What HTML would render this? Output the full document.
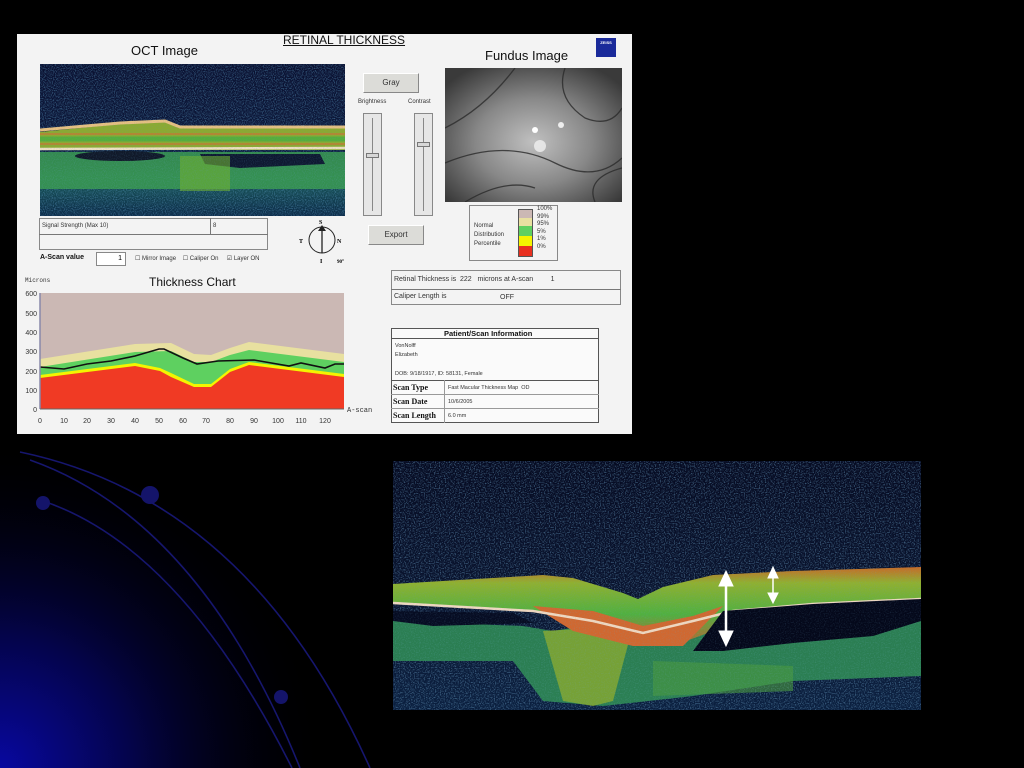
<!DOCTYPE html>
<html><head><meta charset="utf-8"><style>
*{margin:0;padding:0;box-sizing:border-box}
body{width:1024px;height:768px;background:#000;position:relative;overflow:hidden;font-family:"Liberation Sans",sans-serif}
.a{position:absolute}
.panel{left:17px;top:34px;width:615px;height:400px;background:#f3f3f3}
.t{position:absolute;white-space:nowrap;color:#111}
.btn{position:absolute;background:#dcdcd8;border:1px solid #fff;border-right-color:#888;border-bottom-color:#888;font-size:8px;text-align:center;color:#333}
.box{position:absolute;border:1px solid #888;background:#f8f8f8}
</style></head><body>
<svg class="a" style="left:0;top:0" width="1024" height="768">
<defs>
<radialGradient id="bg" cx="0" cy="768" r="330" gradientUnits="userSpaceOnUse">
<stop offset="0" stop-color="#0808a0"/><stop offset="0.4" stop-color="#04044a"/><stop offset="1" stop-color="#000" stop-opacity="0"/></radialGradient>
</defs>
<rect x="0" y="430" width="420" height="338" fill="url(#bg)"/>
<g fill="none" stroke="#16166e" stroke-width="1.6">
<path d="M20 452 Q250 500 370 768"/>
<path d="M30 460 Q200 520 300 768"/>
<path d="M40 500 Q180 545 292 768"/>
</g>
<g fill="#14146a"><circle cx="150" cy="495" r="9"/><circle cx="43" cy="503" r="7"/><circle cx="281" cy="697" r="7"/></g>
</svg>

<div class="a panel"></div>
<div class="t" style="left:131px;top:43px;font-size:13px">OCT Image</div>
<div class="t" style="left:283px;top:33px;font-size:12px;text-decoration:underline">RETINAL THICKNESS</div>
<div class="t" style="left:485px;top:48px;font-size:13px">Fundus Image</div>
<div class="a" style="left:596px;top:38px;width:20px;height:19px;background:#1a2a9a;color:#fff;font-size:4px;text-align:center;line-height:10px;font-weight:bold">ZEISS</div>

<!-- top OCT -->
<svg class="a" style="left:40px;top:64px" width="305" height="152">
<defs><filter id="n1"><feTurbulence type="fractalNoise" baseFrequency="0.9" numOctaves="1" seed="3"/><feColorMatrix values="0 0 0 0 0.1  0 0 0 0 0.3  0 0 0 0 0.5  0 0 0 1.6 -0.7"/></filter>
<linearGradient id="g1" x1="0" y1="0" x2="0" y2="1"><stop offset="0" stop-color="#0a1030"/><stop offset="0.55" stop-color="#0d1a3c"/><stop offset="0.75" stop-color="#1a5a5a"/><stop offset="1" stop-color="#0c2a48"/></linearGradient></defs>
<rect width="305" height="152" fill="url(#g1)"/>
<rect width="305" height="152" filter="url(#n1)" opacity="0.8"/>
<path d="M0 68 L80 60 L125 58 L140 64 L305 64 L305 86 L0 86Z" fill="#8caa30"/>
<path d="M0 66 L80 59 L125 57 L140 63 L305 63" stroke="#e8c080" stroke-width="3" fill="none"/>
<path d="M0 75 L305 75" stroke="#40b040" stroke-width="5" opacity="0.7"/>
<path d="M0 70 L305 70 M0 80 L305 80" stroke="#d07030" stroke-width="2" opacity="0.6"/>
<path d="M0 85 L305 84" stroke="#f0e0c0" stroke-width="2.5"/>
<path d="M0 88 L305 88 L305 125 L0 125Z" fill="#3a9a50" opacity="0.85"/>
<ellipse cx="80" cy="92" rx="45" ry="5" fill="#101828"/>
<path d="M160 90 L280 90 L285 100 L200 104 L165 100Z" fill="#0e1830"/>
<rect x="140" y="92" width="50" height="35" fill="#70b030" opacity="0.6"/>
<rect width="305" height="152" filter="url(#n1)" opacity="0.35"/>
</svg>

<!-- controls -->
<div class="btn" style="left:363px;top:73px;width:56px;height:20px;line-height:18px">Gray</div>
<div class="t" style="left:358px;top:99px;font-size:6px;color:#333">Brightness</div>
<div class="t" style="left:408px;top:99px;font-size:6px;color:#333">Contrast</div>
<div class="box" style="left:363px;top:113px;width:19px;height:103px;background:#e6e6e6"></div>
<div class="a" style="left:372px;top:118px;width:1px;height:93px;background:#888"></div>
<div class="a" style="left:366px;top:153px;width:13px;height:5px;background:#d8d8d8;border:1px solid #777"></div>
<div class="box" style="left:414px;top:113px;width:19px;height:103px;background:#e6e6e6"></div>
<div class="a" style="left:423px;top:118px;width:1px;height:93px;background:#888"></div>
<div class="a" style="left:417px;top:142px;width:13px;height:5px;background:#d8d8d8;border:1px solid #777"></div>
<div class="btn" style="left:368px;top:225px;width:56px;height:20px;line-height:18px">Export</div>

<!-- fundus -->
<svg class="a" style="left:445px;top:68px" width="177" height="134">
<defs><radialGradient id="fg" cx="0.5" cy="0.55" r="0.65"><stop offset="0" stop-color="#c0c0c0"/><stop offset="0.5" stop-color="#888"/><stop offset="1" stop-color="#3a3a3a"/></radialGradient></defs>
<rect width="177" height="134" fill="url(#fg)"/>
<g stroke="#2a2a2a" fill="none" stroke-width="1.3" opacity="0.8">
<path d="M0 60 Q40 40 70 0"/><path d="M0 95 Q60 70 110 95 Q150 115 177 90"/><path d="M120 0 Q110 30 140 50 Q165 60 177 40"/><path d="M20 134 Q60 110 90 120"/><path d="M150 134 Q140 110 177 100"/></g>
<circle cx="95" cy="78" r="6" fill="#f0f0f0" opacity="0.8"/><circle cx="90" cy="62" r="3" fill="#fff"/><circle cx="116" cy="57" r="3" fill="#eee"/>
</svg>

<!-- legend -->
<div class="box" style="left:469px;top:205px;width:89px;height:56px;background:#f3f3f3"></div>
<div class="t" style="left:474px;top:222px;font-size:6px;line-height:9px;color:#333">Normal<br>Distribution<br>Percentile</div>
<div class="a" style="left:518px;top:209px;width:15px;height:48px;border:1px solid #555">
<div style="height:8px;background:#cbb8b4"></div><div style="height:8px;background:#e8e0a0"></div><div style="height:10px;background:#5ed060"></div><div style="height:10px;background:#f4f400"></div><div style="height:10px;background:#e83020"></div></div>
<div class="t" style="left:537px;top:206px;font-size:6px;line-height:7.6px;color:#333">100%<br>99%<br>95%<br>5%<br>1%<br>0%</div>

<!-- signal -->
<div class="box" style="left:39px;top:218px;width:229px;height:32px;background:#f3f3f3"></div>
<div class="a" style="left:39px;top:234px;width:229px;height:1px;background:#777"></div>
<div class="a" style="left:210px;top:218px;width:1px;height:16px;background:#777"></div>
<div class="t" style="left:42px;top:223px;font-size:6px;color:#333">Signal Strength (Max 10)</div>
<div class="t" style="left:213px;top:223px;font-size:6px;color:#333">8</div>
<div class="t" style="left:40px;top:254px;font-size:7px;font-weight:bold">A-Scan value</div>
<div class="box" style="left:96px;top:252px;width:30px;height:14px;background:#fff;font-size:7px;text-align:right;padding-right:3px;line-height:12px">1</div>
<div class="t" style="left:135px;top:255px;font-size:6px;color:#333">☐ Mirror Image &nbsp;&nbsp; ☐ Caliper On &nbsp;&nbsp;&nbsp; ☑ Layer ON</div>
<!-- compass -->
<svg class="a" style="left:297px;top:217px" width="55" height="50">
<circle cx="25" cy="23" r="13" fill="none" stroke="#222" stroke-width="1"/>
<line x1="25" y1="36" x2="25" y2="11" stroke="#222" stroke-width="1.3"/><path d="M21 14 L25 8 L29 14Z" fill="#222"/>
<text x="22" y="7" font-size="6" font-weight="bold" font-family="Liberation Serif">S</text>
<text x="2" y="26" font-size="6" font-weight="bold" font-family="Liberation Serif">T</text>
<text x="40" y="26" font-size="6" font-weight="bold" font-family="Liberation Serif">N</text>
<text x="23" y="46" font-size="6" font-weight="bold" font-family="Liberation Serif">I</text>
<text x="40" y="46" font-size="5" font-weight="bold" font-family="Liberation Serif">90°</text>
</svg>

<!-- retinal thickness box -->
<div class="box" style="left:391px;top:270px;width:230px;height:35px;background:#f3f3f3"></div>
<div class="a" style="left:391px;top:289px;width:230px;height:1px;background:#777"></div>
<div class="t" style="left:394px;top:276px;font-size:7px;color:#333">Retinal Thickness is &nbsp;222 &nbsp;&nbsp;microns at A-scan &nbsp;&nbsp;&nbsp;&nbsp;&nbsp;&nbsp;&nbsp;&nbsp;1</div>
<div class="t" style="left:394px;top:293px;font-size:7px;color:#333">Caliper Length is</div>
<div class="t" style="left:500px;top:294px;font-size:7px;color:#333">OFF</div>

<!-- patient -->
<div class="box" style="left:391px;top:328px;width:208px;height:95px;border-color:#555;background:#fafafa"></div>
<div class="a" style="left:391px;top:338px;width:208px;height:1px;background:#555"></div>
<div class="t" style="left:444px;top:329px;font-size:7.5px;font-weight:bold">Patient/Scan Information</div>
<div class="t" style="left:395px;top:342px;font-size:5.5px;line-height:9px;color:#333">VonNolff<br>Elizabeth</div>
<div class="t" style="left:395px;top:371px;font-size:5.5px;color:#333">DOB: 9/18/1917, ID: 58131, Female</div>
<div class="a" style="left:391px;top:380px;width:208px;height:1px;background:#555"></div>
<div class="a" style="left:391px;top:394px;width:208px;height:1px;background:#999"></div>
<div class="a" style="left:391px;top:408px;width:208px;height:1px;background:#999"></div>
<div class="a" style="left:444px;top:380px;width:1px;height:43px;background:#999"></div>
<div class="t" style="left:393px;top:383px;font-size:8px;font-weight:bold;font-family:'Liberation Serif',serif">Scan Type</div>
<div class="t" style="left:393px;top:397px;font-size:8px;font-weight:bold;font-family:'Liberation Serif',serif">Scan Date</div>
<div class="t" style="left:393px;top:411px;font-size:8px;font-weight:bold;font-family:'Liberation Serif',serif">Scan Length</div>
<div class="t" style="left:448px;top:385px;font-size:5.5px;color:#333">Fast Macular Thickness Map &nbsp;OD</div>
<div class="t" style="left:448px;top:399px;font-size:5.5px;color:#333">10/6/2005</div>
<div class="t" style="left:448px;top:413px;font-size:5.5px;color:#333">6.0 mm</div>

<!-- chart -->
<div class="t" style="left:25px;top:277px;font-size:6px;font-family:'Liberation Mono',monospace;color:#333">Microns</div>
<div class="t" style="left:149px;top:275px;font-size:12px">Thickness Chart</div>
<svg class="a" style="left:0;top:288px" width="380" height="140" font-family="Liberation Sans" font-size="7" fill="#333">
<g transform="translate(0,-288)">
<rect x="40" y="293" width="304" height="116" fill="#cbb8b4"/>
<path d="M40 359 L135 344 L171 343 L194 354 L211 355 L230 348 L249 342 L344 354 L344 409 L40 409Z" fill="#e8e0a0"/>
<path d="M40 367 L135 352 L171 351 L194 362 L211 362 L230 355 L249 350 L344 362 L344 409 L40 409Z" fill="#5ed060"/>
<path d="M40 375 L135 363 L160 368 L171 373 L194 384 L211 384 L230 369 L249 362 L344 374 L344 409 L40 409Z" fill="#f4f400"/>
<path d="M40 378 L135 366 L160 371 L171 377 L194 387 L211 387 L230 372 L249 365 L344 377 L344 409 L40 409Z" fill="#f03a24"/>
<polyline fill="none" stroke="#111" stroke-width="1.6" points="40,367 64,369 87,364 111,361 135,356 159,349 164,349 183,358 197,364 218,361 254,360 289,366 301,363 325,368 335,364 344,364"/>
<line x1="40" y1="293" x2="40" y2="409" stroke="#88a" stroke-width="1.5"/>
<line x1="40" y1="409" x2="344" y2="409" stroke="#666"/>
<g text-anchor="end"><text x="37" y="296">600</text><text x="37" y="316">500</text><text x="37" y="335">400</text><text x="37" y="354">300</text><text x="37" y="374">200</text><text x="37" y="393">100</text><text x="37" y="412">0</text></g>
<g text-anchor="middle"><text x="40" y="423">0</text><text x="64" y="423">10</text><text x="87" y="423">20</text><text x="111" y="423">30</text><text x="135" y="423">40</text><text x="159" y="423">50</text><text x="183" y="423">60</text><text x="206" y="423">70</text><text x="230" y="423">80</text><text x="254" y="423">90</text><text x="278" y="423">100</text><text x="301" y="423">110</text><text x="325" y="423">120</text></g>
<text x="347" y="412" font-family="Liberation Mono">A-scan</text>
</g></svg>

<!-- bottom OCT -->
<svg class="a" style="left:393px;top:461px" width="528" height="249">
<defs><filter id="n2"><feTurbulence type="fractalNoise" baseFrequency="0.8" numOctaves="1" seed="7"/><feColorMatrix values="0 0 0 0 0.15  0 0 0 0 0.35  0 0 0 0 0.55  0 0 0 1.8 -0.85"/></filter>
<linearGradient id="g2" x1="0" y1="0" x2="0" y2="1"><stop offset="0" stop-color="#060b22"/><stop offset="0.6" stop-color="#0a1530"/><stop offset="1" stop-color="#0b2040"/></linearGradient>
<linearGradient id="lay" x1="0" y1="0" x2="0" y2="1"><stop offset="0" stop-color="#c86a28"/><stop offset="0.2" stop-color="#90b030"/><stop offset="0.6" stop-color="#50b040"/><stop offset="1" stop-color="#c06030"/></linearGradient></defs>
<rect width="528" height="249" fill="url(#g2)"/>
<rect width="528" height="249" filter="url(#n2)" opacity="0.8"/>
<path d="M0 160 L130 165 L160 170 L250 155 L330 170 L528 150 L528 215 L400 220 L300 235 L210 245 L150 240 L120 200 L0 200Z" fill="#2f8a55" opacity="0.9"/>
<path d="M150 170 L240 165 L220 240 L200 245 L170 240Z" fill="#8aaa30" opacity="0.8"/>
<path d="M260 200 L400 205 L400 230 L260 235Z" fill="#4a9a40" opacity="0.6"/>
<path d="M0 123 L150 114 L180 117 L230 132 L245 138 L270 126 L320 114 L400 110 L528 106 L528 140 L420 143 L360 150 L320 170 L280 185 L230 175 L190 160 L140 150 L0 143Z" fill="url(#lay)"/>
<path d="M140 145 L200 150 L250 165 L300 155 L330 145 L290 185 L240 185 L180 170Z" fill="#d06830"/>
<path d="M0 142 L140 150 L200 160 L250 172 L300 160 L340 150 L420 143 L528 138" fill="none" stroke="#f0d8c0" stroke-width="2.5"/>
<path d="M330 150 L420 143 L528 138 L528 160 L480 175 L400 182 L330 190 L300 190 Z" fill="#04081a"/>
<path d="M0 150 L120 152 L140 162 L40 165 L0 160Z" fill="#060c22"/>
<rect width="528" height="249" filter="url(#n2)" opacity="0.3"/>
<g fill="#fff" stroke="#fff">
<line x1="333" y1="118" x2="333" y2="178" stroke-width="2.5"/>
<path d="M326 125 L333 110 L340 125Z"/><path d="M326 170 L333 185 L340 170Z"/>
<line x1="380" y1="110" x2="380" y2="138" stroke-width="1.5"/>
<path d="M375 117 L380 106 L385 117Z"/><path d="M375 132 L380 142 L385 132Z"/>
</g>
</svg>
</body></html>
